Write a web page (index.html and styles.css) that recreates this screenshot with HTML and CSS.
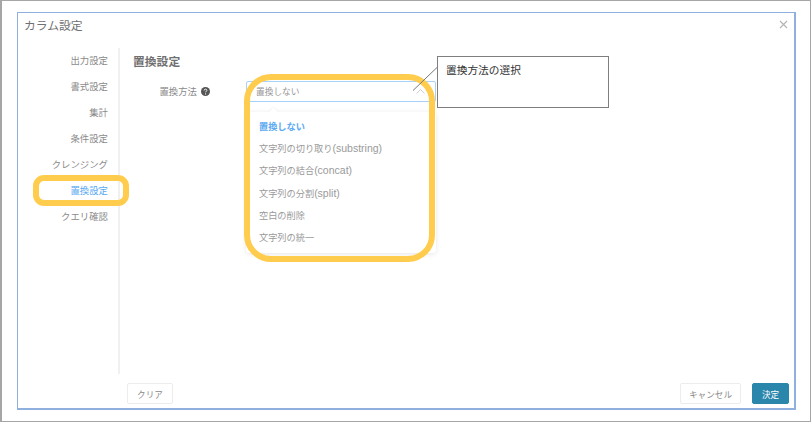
FILE: index.html
```html
<!DOCTYPE html>
<html lang="ja">
<head>
<meta charset="utf-8">
<title>カラム設定</title>
<link rel="stylesheet" href="styles.css">
</head>
<body>
<div class="frame">
  <div class="dialog">
    <header class="dialog-head">
      <h1 class="dialog-title">カラム設定</h1>
      <svg class="close" width="9" height="9" viewBox="0 0 9 9"><path d="M1 1l7 7M8 1L1 8" stroke="#b5b5b5" stroke-width="1.2" fill="none"/></svg>
    </header>
    <div class="dialog-body">
      <nav class="side">
        <a class="side-item">出力設定</a>
        <a class="side-item">書式設定</a>
        <a class="side-item">集計</a>
        <a class="side-item">条件設定</a>
        <a class="side-item">クレンジング</a>
        <a class="side-item active">置換設定</a>
        <a class="side-item">クエリ確認</a>
      </nav>
      <main class="main">
        <h2 class="section-title">置換設定</h2>
        <div class="form-row">
          <div class="form-label">置換方法
            <svg class="help" width="9" height="9" viewBox="0 0 9 9"><circle cx="4.5" cy="4.5" r="4.5" fill="#555"/><path d="M3.1 3.5c0-.9.6-1.4 1.4-1.4s1.4.5 1.4 1.2c0 .9-1.3 1-1.3 2" stroke="#fff" stroke-width=".9" fill="none"/><circle cx="4.6" cy="6.9" r=".6" fill="#fff"/></svg>
          </div>
          <div class="select-wrap">
            <div class="select">
              <span>置換しない</span>
              <svg class="chev" width="9" height="5" viewBox="0 0 9 5"><path d="M.5 4.5l4-4 4 4" stroke="#d0d0d0" fill="none"/></svg>
            </div>
            <div class="dropdown">
              <span class="arrow"></span>
              <div class="option selected">置換しない</div>
              <div class="option">文字列の切り取り<span class="latin">(substring)</span></div>
              <div class="option">文字列の結合<span class="latin">(concat)</span></div>
              <div class="option">文字列の分割<span class="latin">(split)</span></div>
              <div class="option">空白の削除</div>
              <div class="option">文字列の統一</div>
            </div>
          </div>
        </div>
      </main>
    </div>
    <footer class="dialog-foot">
      <button class="btn">クリア</button>
      <span class="spacer"></span>
      <button class="btn cancel">キャンセル</button>
      <button class="btn primary">決定</button>
    </footer>
  </div>
</div>
<div class="mark mark-side"></div>
<div class="mark mark-select"></div>
<svg class="leader" width="25" height="25" viewBox="0 0 25 25"><path d="M0 24.5L24.5 1" stroke="#777" fill="none"/></svg>
<div class="callout">置換方法の選択</div>
</body>
</html>
```

FILE: styles.css
```css
* { box-sizing: border-box; }
html, body { margin: 0; height: 100%; }
body {
  position: relative;
  background: #fff;
  font-family: "Liberation Sans", "Noto Sans CJK JP", sans-serif;
  color: #8a8a8a;
  overflow: hidden;
}
.frame {
  width: 811px;
  height: 422px;
  border: 1px solid #a6a6a6;
  border-left-width: 2px;
  padding: 11px 14px 11px 15px;
}
.dialog {
  height: 398px;
  border: 1px solid #8fb0df;
  border-width: 1px 2px 2px 1px;
  display: flex;
  flex-direction: column;
  background: #fff;
}
.dialog-head {
  display: flex;
  align-items: flex-start;
  justify-content: space-between;
  height: 35px;
  padding: 3px 6.5px 0 6px;
  flex: none;
}
.dialog-title {
  margin: 0;
  font-size: 11.8px;
  line-height: 20px;
  font-weight: 400;
  color: #707070;
}
.close { margin-top: 4px; }
.dialog-body {
  display: flex;
  height: 326px;
  flex: none;
}
.side {
  width: 102px;
  flex: none;
  border-right: 2px solid #f0f0f0;
  padding: 0 10px 0 0;
  display: flex;
  flex-direction: column;
  align-items: flex-end;
}
.side-item {
  height: 26px;
  line-height: 25px;
  font-size: 9.4px;
  color: #8a8a8a;
}
.side-item.active { color: #5aa9f2; }
.main { padding: 0 0 0 13px; flex: 1; }
.section-title {
  margin: 0;
  font-size: 11.8px;
  line-height: 29px;
  font-weight: 700;
  color: #707070;
}
.form-row { display: flex; margin-top: 4px; }
.form-label {
  width: 113px;
  height: 20px;
  display: flex;
  align-items: center;
  justify-content: flex-end;
  gap: 4px;
  padding-right: 36px;
  font-size: 9.4px;
  color: #8a8a8a;
  white-space: nowrap;
}
.select-wrap { position: relative; width: 190px; }
.select {
  height: 21px;
  border: 1px solid #a9d2f8;
  border-radius: 2px;
  display: flex;
  align-items: center;
  justify-content: space-between;
  padding: 0 10px 0 9px;
  font-size: 8.7px;
  color: #969696;
}
.dropdown {
  position: absolute;
  top: 31px;
  left: 0;
  width: 190px;
  height: 141px;
  background: #fff;
  border-radius: 3px;
  box-shadow: 0 1px 5px rgba(0,0,0,.1);
  padding: 4px 0 0 13px;
}
.arrow {
  position: absolute;
  top: -3px;
  left: 24px;
  width: 7px;
  height: 7px;
  background: #fff;
  transform: rotate(45deg);
  box-shadow: -1px -1px 2px rgba(0,0,0,.04);
}
.option {
  height: 22.2px;
  line-height: 22px;
  font-size: 9.2px;
  color: #9a9a9a;
  white-space: nowrap;
}
.option .latin { font-size: 10.5px; line-height: 1; vertical-align: baseline; }
.option.selected { color: #5aa9f2; font-weight: 700; }
.dialog-foot {
  display: flex;
  align-items: flex-start;
  gap: 11px;
  padding: 9px 5px 0 109px;
  flex: 1;
}
.spacer { flex: 1; }
.btn {
  height: 21px;
  width: 46px;
  padding: 0;
  background: #fff;
  border: 1px solid #ececec;
  border-radius: 2px;
  font: 400 8.6px "Liberation Sans", "Noto Sans CJK JP", sans-serif;
  color: #8a8a8a;
}
.btn.cancel { width: 61px; }
.btn.primary {
  width: 37px;
  background: #2b86ab;
  border-color: #2b86ab;
  color: #fff;
}
.mark {
  position: absolute;
  border: 6px solid #ffcc4d;
  pointer-events: none;
}
.mark-side { left: 33px; top: 175px; width: 96px; height: 31px; border-radius: 11px; }
.mark-select { left: 244px; top: 74px; width: 191px; height: 188px; border-radius: 27px; }
.leader { position: absolute; left: 413px; top: 66px; }
.callout {
  position: absolute;
  left: 437px;
  top: 56px;
  width: 172px;
  height: 52px;
  border: 1px solid #7f7f7f;
  padding: 4px 8px;
  background: #fff;
  font-size: 10.7px;
  line-height: 18px;
  color: #333;
}
```
